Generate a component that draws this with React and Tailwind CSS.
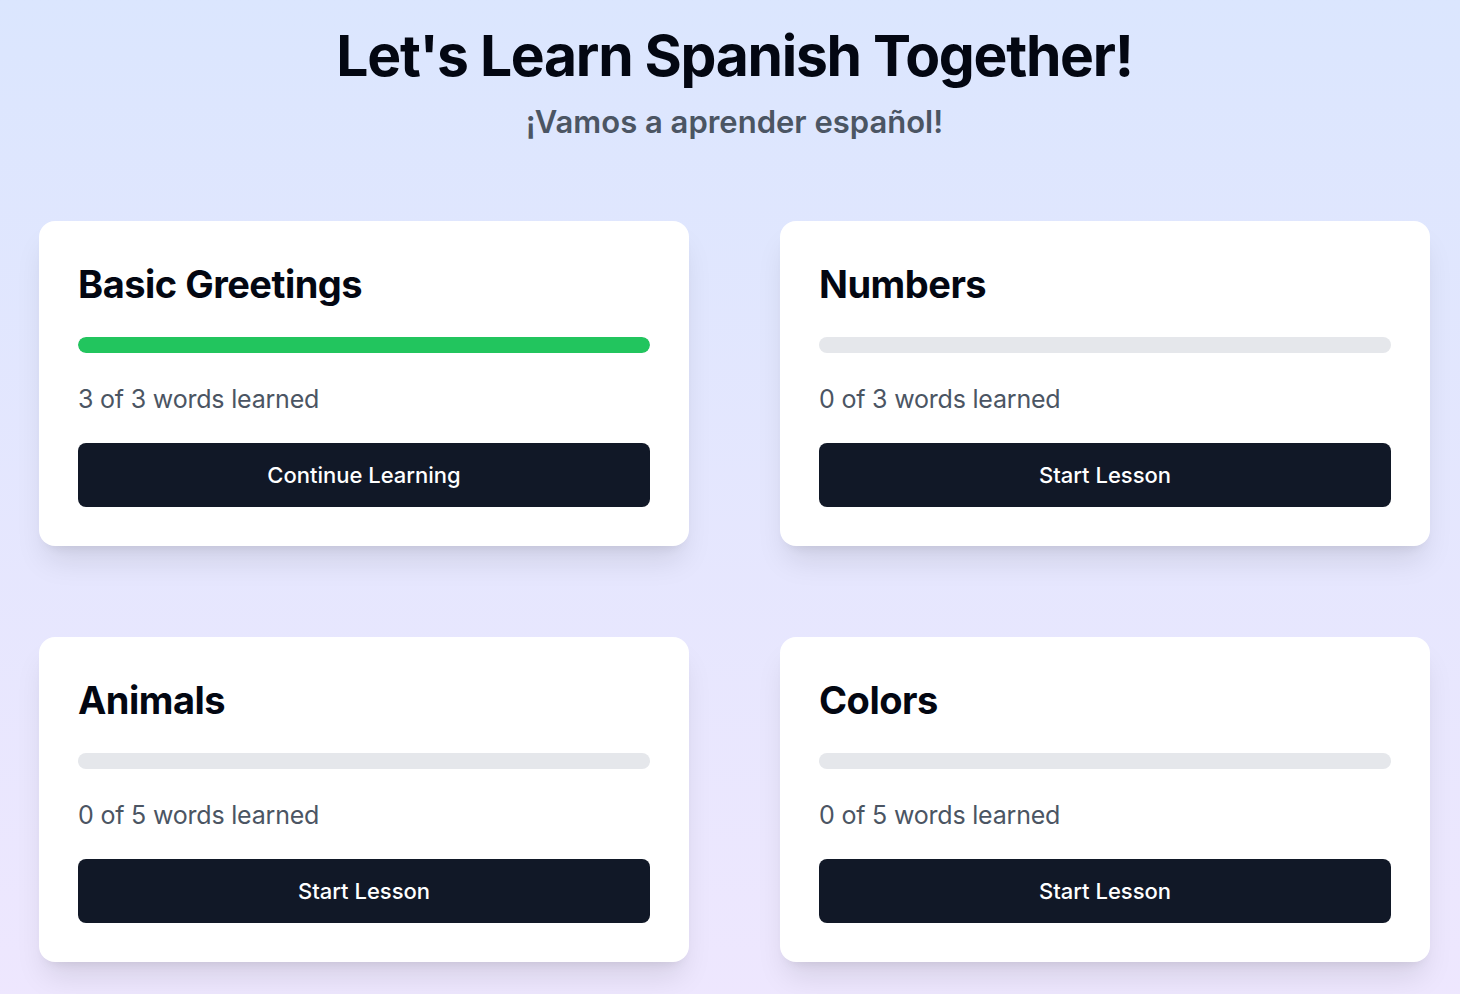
const lessons = [
  { title: "Basic Greetings", learned: 3, total: 3 },
  { title: "Numbers", learned: 0, total: 3 },
  { title: "Animals", learned: 0, total: 5 },
  { title: "Colors", learned: 0, total: 5 },
];

function LessonCard({ title, learned, total }) {
  const pct = total ? (learned / total) * 100 : 0;
  return (
    <div className="bg-white rounded-[16px] p-[39px] shadow-[0_20px_30px_-6px_rgba(0,0,0,0.1),0_8px_12px_-8px_rgba(0,0,0,0.1)]">
      <h2 className="text-[38px] leading-[48px] font-bold text-[#030712] tracking-[-0.5px]">{title}</h2>
      <div className="mt-[29px] h-[16px] w-full rounded-full bg-[#e5e7eb] overflow-hidden">
        <div className="h-full rounded-full bg-[#22c55e]" style={{ width: `${pct}%` }}></div>
      </div>
      <p className="mt-[26px] text-[25px] leading-[40px] text-[#4b5563] tracking-[-0.2px]">
        {learned} of {total} words learned
      </p>
      <button className="mt-[24px] w-full h-[64px] rounded-[8px] bg-[#111827] text-white text-[22px] font-medium">
        {learned > 0 ? "Continue Learning" : "Start Lesson"}
      </button>
    </div>
  );
}

export default function App() {
  return (
    <div
      className="min-h-screen bg-gradient-to-b from-[#dbe6fe] to-[#eee7fe] pl-[39px] pr-[30px] pt-[20px] pb-[40px]"
      style={{ fontFamily: "Inter, 'Noto Sans', sans-serif" }}
    >
      <div className="text-center">
        <h1 className="text-[57px] leading-[72px] font-bold text-[#030712] tracking-[-1.3px]">
          Let's Learn Spanish Together!
        </h1>
        <p className="mt-[10px] text-[31px] leading-[40px] font-semibold text-[#4b5563]">
          ¡Vamos a aprender español!
        </p>
      </div>
      <div className="mt-[79px] grid grid-cols-2 gap-x-[91px] gap-y-[91px]">
        {lessons.map((l) => (
          <LessonCard key={l.title} {...l} />
        ))}
      </div>
    </div>
  );
}
